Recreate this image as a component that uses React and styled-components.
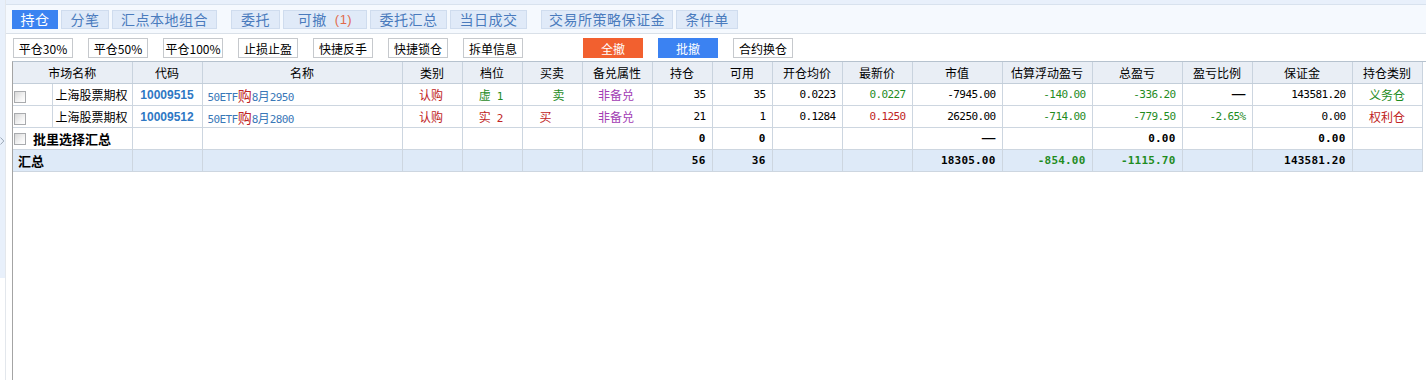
import React from "react";
import styled, { createGlobalStyle } from "styled-components";

const CJK = `"Noto Sans CJK SC", "Liberation Sans", sans-serif`;
const MONO = `"DejaVu Sans Mono", "Liberation Mono", monospace`;

const GREEN = "#1f8c1f";
const RED = "#c02424";
const PURPLE = "#a23db4";

const GlobalStyle = createGlobalStyle`
  html, body { margin: 0; padding: 0; background: #fff; }
  body { font-family: ${CJK}; font-size: 12px; color: #000; }
`;

const tabs = [
  { label: "持仓", w: 46, active: true },
  { label: "分笔", w: 48 },
  { label: "汇点本地组合", w: 105 },
  { label: "委托", w: 49, gap: 11 },
  { label: "可撤", w: 84, count: "(1)" },
  { label: "委托汇总", w: 77 },
  { label: "当日成交", w: 77 },
  { label: "交易所策略保证金", w: 132, gap: 11 },
  { label: "条件单", w: 62 },
];

const actions = [
  { label: "平仓30%" },
  { label: "平仓50%" },
  { label: "平仓100%" },
  { label: "止损止盈" },
  { label: "快捷反手" },
  { label: "快捷锁仓" },
  { label: "拆单信息" },
  { label: "全撤", tone: "orange", ml: 45 },
  { label: "批撤", tone: "blue" },
  { label: "合约换仓" },
];

const widths = [39, 80, 70, 200, 60, 60, 60, 70, 60, 60, 70, 70, 90, 90, 90, 70, 100, 70];

const headers = [
  "代码", "名称", "类别", "档位", "买卖", "备兑属性", "持仓", "可用", "开仓均价",
  "最新价", "市值", "估算浮动盈亏", "总盈亏", "盈亏比例", "保证金", "持仓类别",
];

const positions = [
  {
    code: "10009515", strike: "2950", posChar: "虚", posNum: "1", posColor: GREEN,
    side: "卖", sell: true, hold: "35", avail: "35", open: "0.0223", last: "0.0227",
    lastColor: GREEN, mv: "-7945.00", float: "-140.00", total: "-336.20", ratio: null,
    margin: "143581.20", type: "义务仓", typeColor: GREEN,
  },
  {
    code: "10009512", strike: "2800", posChar: "实", posNum: "2", posColor: RED,
    side: "买", sell: false, hold: "21", avail: "1", open: "0.1284", last: "0.1250",
    lastColor: RED, mv: "26250.00", float: "-714.00", total: "-779.50", ratio: "-2.65%",
    margin: "0.00", type: "权利仓", typeColor: RED,
  },
];

export default function App() {
  return (
    <>
      <GlobalStyle />
      <Page>
        <SideRail>
          <RailBlue>
            <svg width="5" height="8" viewBox="0 0 5 8">
              <polyline points="0.5,0.5 3.8,4 0.5,7.5" fill="none" stroke="#9aa6b4" strokeWidth="1" />
            </svg>
          </RailBlue>
        </SideRail>
        <Main>
          <TopBand />
          <TabBar>
            {tabs.map((t) => (
              <Tab key={t.label} $w={t.w} $active={t.active} $gap={t.gap}>
                {t.label}
                {t.count && <TabCount>{t.count}</TabCount>}
              </Tab>
            ))}
          </TabBar>
          <ActionBar>
            {actions.map((a) => (
              <ActionButton key={a.label} $tone={a.tone} $ml={a.ml}>
                {a.label}
              </ActionButton>
            ))}
          </ActionBar>
          <TableWrap>
            <Grid>
              <colgroup>
                {widths.map((w, i) => (
                  <col key={i} style={{ width: w }} />
                ))}
              </colgroup>
              <thead>
                <tr>
                  <Th colSpan={2}>市场名称</Th>
                  {headers.map((h) => (
                    <Th key={h}>{h}</Th>
                  ))}
                </tr>
              </thead>
              <tbody>
                {positions.map((p) => (
                  <tr key={p.code}>
                    <CheckCell>
                      <Check />
                    </CheckCell>
                    <Td>上海股票期权</Td>
                    <Code>{p.code}</Code>
                    <NameCell>
                      50ETF<Buy>购</Buy>8<Month>月</Month>{p.strike}
                    </NameCell>
                    <Td $align="center" $color={RED}>认购</Td>
                    <Td $align="center" $color={p.posColor}>
                      {p.posChar}
                      <Digit>{p.posNum}</Digit>
                    </Td>
                    <SideCell $sell={p.sell} $color={p.sell ? GREEN : RED}>{p.side}</SideCell>
                    <Td $align="center" $color={PURPLE}>非备兑</Td>
                    <Num>{p.hold}</Num>
                    <Num>{p.avail}</Num>
                    <Num>{p.open}</Num>
                    <Num $color={p.lastColor}>{p.last}</Num>
                    <Num>{p.mv}</Num>
                    <Num $color={GREEN}>{p.float}</Num>
                    <Num $color={GREEN}>{p.total}</Num>
                    {p.ratio ? (
                      <Num $color={GREEN}>{p.ratio}</Num>
                    ) : (
                      <DashCell>
                        <Dash>—</Dash>
                      </DashCell>
                    )}
                    <Num>{p.margin}</Num>
                    <TypeCell $color={p.typeColor}>{p.type}</TypeCell>
                  </tr>
                ))}
                <tr>
                  <Td colSpan={2} $pl={1}>
                    <BatchLabel>
                      <Check />
                      批里选择汇总
                    </BatchLabel>
                  </Td>
                  <Td />
                  <Td />
                  <Td />
                  <Td />
                  <Td />
                  <Td />
                  <Num $bold>0</Num>
                  <Num $bold>0</Num>
                  <Td />
                  <Td />
                  <DashCell>
                    <Dash>—</Dash>
                  </DashCell>
                  <Td />
                  <Num $bold>0.00</Num>
                  <Td />
                  <Num $bold>0.00</Num>
                  <Td />
                </tr>
                <TotalRow>
                  <Td colSpan={2}>
                    <TotalLabel>汇总</TotalLabel>
                  </Td>
                  <Td />
                  <Td />
                  <Td />
                  <Td />
                  <Td />
                  <Td />
                  <Num $bold>56</Num>
                  <Num $bold>36</Num>
                  <Td />
                  <Td />
                  <Num $bold>18305.00</Num>
                  <Num $bold $color={GREEN}>-854.00</Num>
                  <Num $bold $color={GREEN}>-1115.70</Num>
                  <Td />
                  <Num $bold>143581.20</Num>
                  <Td />
                </TotalRow>
              </tbody>
            </Grid>
          </TableWrap>
        </Main>
      </Page>
    </>
  );
}

const Page = styled.div`
  display: flex;
  height: 380px;
  overflow: hidden;
  background: #fff;
`;

const SideRail = styled.div`
  width: 5px;
  border-right: 1px solid #e3e7ec;
  display: flex;
  flex-direction: column;
`;

const RailBlue = styled.div`
  height: 278px;
  background: #e8f0fb;
  padding-top: 137px;
  box-sizing: border-box;
  svg { display: block; }
`;

const Main = styled.div`
  flex: 1;
  min-width: 0;
  display: flex;
  flex-direction: column;
`;

const TopBand = styled.div`
  height: 4px;
  background: #e8f0fb;
  border-bottom: 1px solid #d8e2ee;
`;

const TabBar = styled.div`
  height: 28px;
  background: #f5f9fe;
  border-bottom: 1px solid #d9e0e8;
  display: flex;
  align-items: center;
  gap: 3px;
  padding-left: 6px;
`;

const Tab = styled.div`
  width: ${(p) => p.$w}px;
  height: 19px;
  margin-left: ${(p) => p.$gap || 0}px;
  box-sizing: border-box;
  display: flex;
  align-items: center;
  justify-content: center;
  font-size: 14px;
  letter-spacing: 0.5px;
  background: ${(p) => (p.$active ? "#3b83f1" : "#e0eaf8")};
  border: 1px solid ${(p) => (p.$active ? "#3b83f1" : "#cfdcee")};
  color: ${(p) => (p.$active ? "#fff" : "#4a7bbd")};
`;

const TabCount = styled.span`
  margin-left: 8px;
  color: #e06a4c;
  font-family: "Liberation Sans", sans-serif;
  font-size: 13px;
`;

const ActionBar = styled.div`
  height: 27px;
  box-sizing: border-box;
  padding: 4px 0 0 7px;
  display: flex;
  align-items: flex-start;
  gap: 15px;
`;

const toneBg = { orange: "#f2602f", blue: "#3b82f2" };

const ActionButton = styled.div`
  width: 60px;
  height: 20px;
  box-sizing: border-box;
  margin-left: ${(p) => p.$ml || 0}px;
  display: flex;
  align-items: center;
  justify-content: center;
  font-size: 12px;
  background: ${(p) => toneBg[p.$tone] || "#fff"};
  border: 1px solid ${(p) => toneBg[p.$tone] || "#c6c9cd"};
  color: ${(p) => (p.$tone ? "#fff" : "#000")};
`;

const TableWrap = styled.div`
  flex: 1;
  margin-left: 6px;
  border-left: 1px solid #a4a4a4;
  border-top: 1px solid #b6c2ce;
  overflow: hidden;
`;

const Grid = styled.table`
  border-collapse: collapse;
  table-layout: fixed;
  width: 1409px;
`;

const Th = styled.th`
  height: 21px;
  padding: 0;
  background: #e9eef5;
  border-right: 1px solid #c9d3de;
  border-bottom: 1px solid #c3ced9;
  font-weight: normal;
  font-size: 12px;
  text-align: center;
  white-space: nowrap;
`;

const Td = styled.td`
  height: 21px;
  padding: 0 5px 0 ${(p) => (p.$pl != null ? p.$pl : 3)}px;
  border-right: 1px solid #cdd6e0;
  border-bottom: 1px solid #cdd6e0;
  white-space: nowrap;
  overflow: hidden;
  font-size: 12px;
  text-align: ${(p) => p.$align || "left"};
  color: ${(p) => p.$color || "#000"};
  font-weight: ${(p) => (p.$bold ? "bold" : "normal")};
`;

const CheckCell = styled(Td)`
  padding: 0 0 0 1px;
`;

const Check = styled.span`
  display: inline-block;
  vertical-align: middle;
  width: 12px;
  height: 12px;
  box-sizing: border-box;
  border: 1px solid #a9abae;
  background: linear-gradient(135deg, #d8d8d8 0%, #f4f4f4 60%, #fff 100%);
`;

const Code = styled(Td)`
  text-align: center;
  padding: 0;
  font-family: "Liberation Sans", sans-serif;
  font-weight: bold;
  font-size: 12px;
  color: #2e78c4;
`;

const NameCell = styled(Td)`
  padding-left: 5px;
  font-family: ${MONO};
  font-size: 11px;
  letter-spacing: -0.6px;
  color: #3a78b8;
`;

const Buy = styled.span`
  font-family: ${CJK};
  font-size: 14px;
  letter-spacing: 0;
  color: ${RED};
`;

const Month = styled.span`
  font-family: ${CJK};
  font-size: 12px;
  letter-spacing: 0;
`;

const Digit = styled.span`
  margin-left: 6px;
  font-family: ${MONO};
  font-size: 11px;
`;

const SideCell = styled(Td)`
  padding-left: ${(p) => (p.$sell ? 30 : 17)}px;
`;

const Num = styled(Td)`
  text-align: right;
  padding: 0 6px 0 0;
  font-family: ${MONO};
  font-size: 11px;
  letter-spacing: ${(p) => (p.$bold ? "0.2px" : "-0.6px")};
`;

const DashCell = styled(Td)`
  text-align: right;
  padding: 0 5px 0 0;
`;

const Dash = styled.span`
  display: inline-block;
  width: 12px;
  text-align: center;
  font-weight: bold;
  transform: translateY(-2px) scaleX(1.4);
  transform-origin: right center;
`;

const TypeCell = styled(Td)`
  text-align: center;
  padding: 0;
  font-size: 12px;
`;

const BatchLabel = styled.span`
  display: flex;
  align-items: center;
  gap: 7px;
  font-size: 13px;
  font-weight: bold;
`;

const TotalLabel = styled.span`
  padding-left: 2px;
  font-size: 13px;
  font-weight: bold;
`;

const TotalRow = styled.tr`
  td { background: #deeaf8; }
`;
